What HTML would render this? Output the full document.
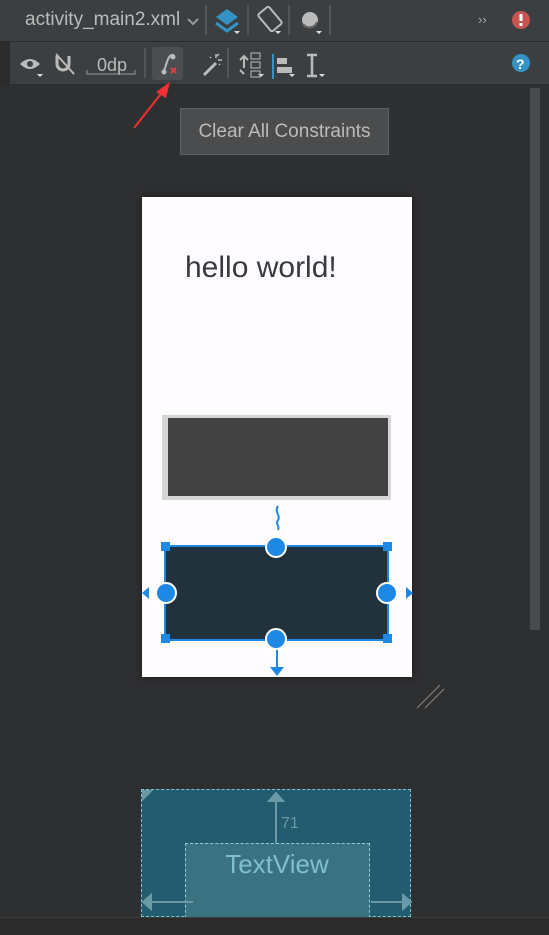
<!DOCTYPE html>
<html><head><style>
body{margin:0;width:549px;height:934px;background:#2e2f31;position:relative;overflow:hidden;font-family:"Liberation Sans",sans-serif}
.a{position:absolute}
</style></head><body>
<div class="a" style="left:0;top:0;width:549px;height:41px;background:#3c3f41;border-bottom:1px solid #2b2b2b"></div>
<div class="a" style="left:0;top:42px;width:10px;height:43px;background:#2b2b2b"></div>
<div class="a" style="left:10px;top:42px;width:539px;height:42px;background:#3c3f41;border-bottom:1px solid #2b2b2b"></div>
<div class="a" style="left:25px;top:9px;color:#bbbbbb;font-size:19px">activity_main2.xml</div>
<svg class="a" style="left:0;top:0" width="549" height="85">
<path d="M188 19l5 5 5-5" stroke="#999" stroke-width="2" fill="none"/>
<g stroke="#555" stroke-width="2"><line x1="206" y1="5" x2="206" y2="35"/><line x1="248" y1="5" x2="248" y2="35"/><line x1="289" y1="5" x2="289" y2="35"/><line x1="330" y1="5" x2="330" y2="35"/><line x1="145" y1="48" x2="145" y2="78"/><line x1="228" y1="48" x2="228" y2="78"/></g>
<path d="M216 17l11-8 11 8-11 8z" fill="#3592c4"/><path d="M216 23l11 8 11-8" stroke="#3592c4" stroke-width="3" fill="none"/>
<path d="M234 31h6l-3 3z" fill="#ddd"/>
<rect x="263" y="8" width="14" height="22" rx="2" transform="rotate(-40 270 19)" stroke="#bbb" stroke-width="2" fill="none"/>
<path d="M275 31h6l-3 3zM316 31h6l-3 3zM258 74h6l-3 3zM289 74h6l-3 3zM319 74h6l-3 3zM37 74h6l-3 3z" fill="#ddd"/>
<circle cx="310" cy="20" r="8" fill="#bbb"/><path d="M303 24a8 8 0 0 0 14-2" stroke="#666" stroke-width="2" fill="none"/>
<text x="478" y="24" fill="#aaa" font-size="13">››</text>
<circle cx="521" cy="20" r="9" fill="#c75450"/><rect x="519.5" y="14" width="3" height="7" fill="#fff"/><rect x="519.5" y="23" width="3" height="3" fill="#fff"/>
<path d="M20 64q10-10 20 0q-10 10-20 0z" fill="#bbb"/><circle cx="30" cy="64" r="3" fill="#3c3f41"/>
<path d="M57 56v8a6 6 0 0 0 12 0v-8" stroke="#bbb" stroke-width="3" fill="none"/><line x1="56" y1="54" x2="74" y2="74" stroke="#bbb" stroke-width="2"/>
<text x="97" y="71" fill="#bbb" font-size="18">0dp</text><path d="M87 70v4h48v-4" stroke="#999" fill="none"/>
<rect x="152" y="47" width="31" height="33" rx="3" fill="#4b4e50"/>
<path d="M164 71c2-5 3-12 6-15 2-2 4-1 4 0" stroke="#bbb" stroke-width="2" fill="none"/><circle cx="173" cy="57" r="2.5" fill="#bbb"/><circle cx="164" cy="72" r="2.5" fill="#bbb"/>
<path d="M171 68l5 5M176 68l-5 5" stroke="#e04040" stroke-width="2"/>
<path d="M204 75l12-12" stroke="#bbb" stroke-width="3"/><path d="M216 54v4M218 60h4M217 56l2-2M210 57l1 1M219 64l1 1" stroke="#bbb" stroke-width="1.5"/>
<path d="M244 56v12M240 60l4-4 4 4M240 70l4 4" stroke="#bbb" stroke-width="2" fill="none"/><rect x="251" y="53" width="9" height="6" stroke="#bbb" fill="none"/><rect x="251" y="62" width="9" height="6" stroke="#bbb" fill="none"/><rect x="251" y="71" width="9" height="6" stroke="#bbb" fill="none"/>
<line x1="273" y1="54" x2="273" y2="79" stroke="#3592c4" stroke-width="2"/><rect x="277" y="58" width="10" height="6" fill="#bbb"/><rect x="277" y="67" width="15" height="6" fill="#bbb"/>
<path d="M307 55h10M307 76h10M312 55v21" stroke="#bbb" stroke-width="2.5"/>
<circle cx="521" cy="63" r="9" fill="#3592c4"/><text x="516" y="69" fill="#fff" font-size="14" font-weight="bold">?</text>
</svg>
<svg class="a" style="left:130px;top:80px" width="40" height="50"><path d="M4 48L34 10" stroke="#f03030" stroke-width="2"/><path d="M40 2L26 12l10 6z" fill="#f03030"/></svg>
<div class="a" style="left:530px;top:88px;width:10px;height:542px;background:#4a4b4d"></div>
<div class="a" style="left:180px;top:108px;width:207px;height:45px;background:#4b4c4d;border:1px solid #5f6062;color:#bbbbbb;font-size:19px;line-height:45px;text-align:center">Clear All Constraints</div>
<div class="a" style="left:142px;top:197px;width:270px;height:480px;background:#fefcfe;box-shadow:0 0 6px #1a1a1a"></div>
<div class="a" style="left:185px;top:251px;color:#3a3a3d;font-size:30px">hello world!</div>
<div class="a" style="left:162px;top:415px;width:220px;height:78px;background:#424242;border:3px solid #d6d6d6;border-width:3px 3px 4px 6px"></div>
<svg class="a" style="left:138px;top:500px" width="280" height="180">
<path d="M140 6c-4 6 3 10 0 14s2 6 0 10" stroke="#1e88e5" stroke-width="2" fill="none"/>
<rect x="27" y="46" width="223" height="94" fill="#22323c" stroke="#1e88e5" stroke-width="2"/>
<g fill="#1e88e5"><rect x="23" y="42" width="9" height="9"/><rect x="245" y="42" width="9" height="9"/><rect x="23" y="134" width="9" height="9"/><rect x="245" y="134" width="9" height="9"/>
<path d="M4 93l7-6v12zM275 93l-7-6v12zM132 167h14l-7 9z"/></g>
<line x1="139" y1="140" x2="139" y2="168" stroke="#1e88e5" stroke-width="2"/>
<g fill="#1e88e5" stroke="#fff" stroke-width="2"><circle cx="138" cy="47" r="10"/><circle cx="28" cy="93" r="10"/><circle cx="249" cy="93" r="10"/><circle cx="138" cy="139" r="10"/></g>
</svg>
<svg class="a" style="left:412px;top:680px" width="35" height="30"><path d="M5 28L28 5M13 28L32 9" stroke="#888" stroke-width="1"/></svg>
<div class="a" style="left:141px;top:789px;width:270px;height:128px;background:#235c6e;border:1px dashed #7fc0d0;box-sizing:border-box"></div>
<div class="a" style="left:185px;top:843px;width:185px;height:80px;background:#3a7282;border:1px dashed #8ccbd8;box-sizing:border-box"></div>
<svg class="a" style="left:141px;top:789px" width="271" height="128">
<g stroke="#6a9aa6" stroke-width="2" fill="#6a9aa6"><line x1="135" y1="6" x2="135" y2="54"/><path d="M128 12l7-8 7 8z"/><line x1="4" y1="113" x2="52" y2="113"/><path d="M2 113l8-7v14z"/><line x1="230" y1="113" x2="268" y2="113"/><path d="M270 113l-8-7v14z"/><path d="M2 2l8 0-8 8z"/></g>
<text x="140" y="39" fill="#6a9aa6" font-size="16">71</text>
</svg>
<div class="a" style="left:182px;top:849px;width:190px;text-align:center;color:#7fbfd0;font-size:26px">TextView</div>
<div class="a" style="left:0;top:917px;width:549px;height:17px;background:#2b2b2b;border-top:1px solid #393b3d"></div>
</body></html>
